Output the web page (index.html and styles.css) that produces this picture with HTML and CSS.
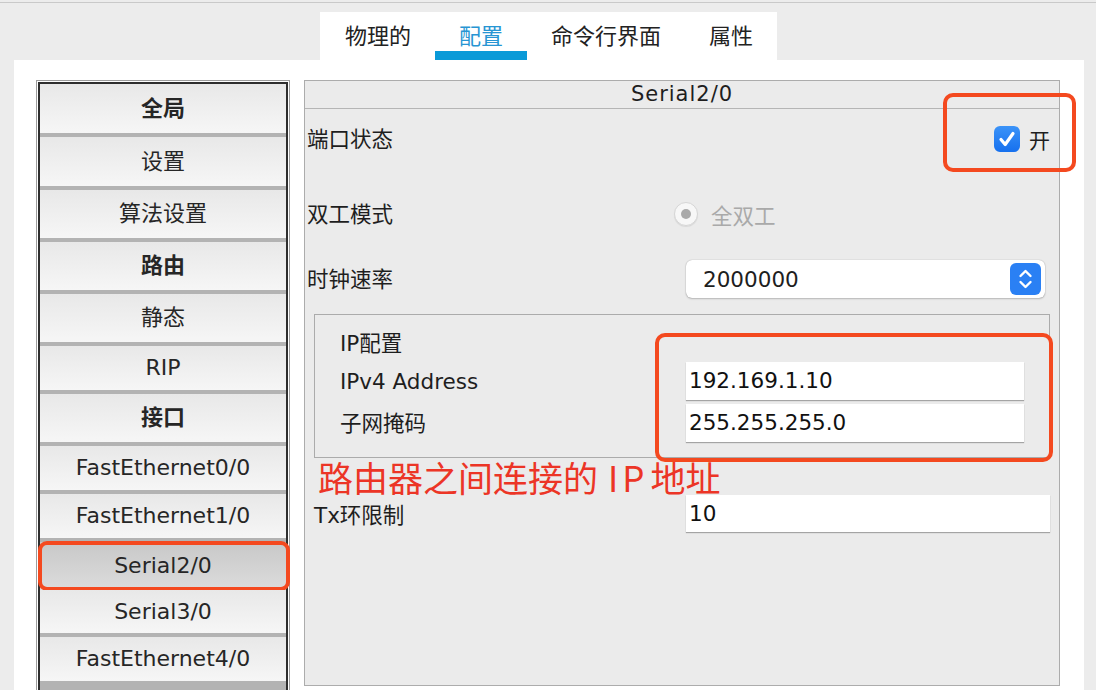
FILE: index.html
```html
<!DOCTYPE html>
<html lang="zh">

<head>
    <meta charset="UTF-8">
    <title>Router Serial2/0</title>
    <link rel="stylesheet" href="styles.css">
</head>

<body>

    <div class="topline"></div>

    <!-- Tabbladen -->
    <div class="tabs">
        <div class="tab">物理的</div>
        <div class="tab active">配置</div>
        <div class="tab">命令行界面</div>
        <div class="tab">属性</div>
    </div>

    <div class="content">

        <!-- Linker menu -->
        <div class="nav">
            <div class="nav-inner">
                <div class="item tall head">全局</div>
                <div class="item tall">设置</div>
                <div class="item mid">算法设置</div>
                <div class="item mid head">路由</div>
                <div class="item mid">静态</div>
                <div class="item">RIP</div>
                <div class="item mid head">接口</div>
                <div class="item">FastEthernet0/0</div>
                <div class="item">FastEthernet1/0</div>
                <div class="item mid selected">Serial2/0<span class="mark nav-mark"></span></div>
                <div class="item short">Serial3/0</div>
                <div class="item">FastEthernet4/0</div>
            </div>
        </div>

        <!-- Interface details -->
        <div class="detail">
            <div class="detail-head">Serial2/0</div>

            <div class="row row-status">
                <span class="label cjk">端口状态</span>
                <label class="onoff">
                    <svg width="26" height="26" viewBox="0 0 26 26">
                        <defs>
                            <linearGradient id="cb" x1="0" y1="0" x2="0" y2="1">
                                <stop offset="0" stop-color="#3b93f8" />
                                <stop offset="1" stop-color="#1670ee" />
                            </linearGradient>
                        </defs>
                        <rect x="0" y="0" width="26" height="26" rx="6" fill="url(#cb)" />
                        <polyline points="7,13.5 11.2,18.5 19,7.5" fill="none" stroke="#fff" stroke-width="3.2"
                            stroke-linecap="round" stroke-linejoin="round" />
                    </svg>
                    <span>开</span>
                </label>
                <span class="mark status-mark"></span>
            </div>

            <div class="row row-duplex">
                <span class="label cjk">双工模式</span>
                <span class="radio"><span class="dot"></span></span>
                <span class="radio-text">全双工</span>
            </div>

            <div class="row row-clock">
                <span class="label cjk">时钟速率</span>
                <div class="select">
                    <span>2000000</span>
                    <svg class="stepper" width="31" height="32" viewBox="0 0 31 32">
                        <rect x="0" y="0" width="31" height="32" rx="6" fill="#2a80f4" />
                        <polyline points="10.5,13 15.5,8 20.5,13" fill="none" stroke="#fff" stroke-width="2.4"
                            stroke-linecap="round" stroke-linejoin="round" />
                        <polyline points="10.5,19 15.5,24 20.5,19" fill="none" stroke="#fff" stroke-width="2.4"
                            stroke-linecap="round" stroke-linejoin="round" />
                    </svg>
                </div>
            </div>

            <div class="ipbox">
                <div class="ip-title">IP配置</div>
                <div class="ip-row">
                    <span class="ip-label">IPv4 Address</span>
                    <div class="field">192.169.1.10</div>
                </div>
                <div class="ip-row">
                    <span class="ip-label cjk">子网掩码</span>
                    <div class="field">255.255.255.0</div>
                </div>
                <span class="mark ip-mark"></span>
            </div>

            <div class="note">路由器之间连接的<span class="note-ip">IP</span>地址</div>

            <div class="row row-tx">
                <span class="label">Tx环限制</span>
                <div class="field wide">10</div>
            </div>
        </div>

    </div>

</body>

</html>
```

FILE: styles.css
```css
/* Basis */
html,
body {
    margin: 0;
    padding: 0;
    overflow: hidden;
}

body {
    background: #ececec;
    font-family: "DejaVu Sans", "Noto Sans CJK SC", sans-serif;
    color: #1e1e1e;
}

.topline {
    height: 2px;
    border-bottom: 1px solid #c9c9c9;
}

/* Tabbladen */
.tabs {
    display: inline-flex;
    margin: 9px 0 0 320px;
    background: #fff;
    height: 48px;
    padding-left: 1px;
}

.tab {
    position: relative;
    padding: 0 24px;
    font-family: "Noto Sans CJK SC", sans-serif;
    font-size: 22px;
    line-height: 45px;
    color: #222;
}

.tab.active {
    color: #2795d3;
}

.tab.active::after {
    content: "";
    position: absolute;
    left: 0;
    right: 0;
    bottom: 0;
    height: 9px;
    background: #0a9ad8;
}

/* Witte inhoud */
.content {
    display: flex;
    align-items: flex-start;
    gap: 14px;
    margin-left: 14px;
    width: 1070px;
    height: 630px;
    box-sizing: border-box;
    padding: 20px 0 0 22px;
    background: #fff;
    overflow: hidden;
}

/* Linker menu */
.nav {
    width: 254px;
    flex: none;
    box-sizing: border-box;
    border: 1px solid #9c9c9c;
    padding: 1px;
    background: #fff;
}

.nav-inner {
    min-height: 640px;
    border: 2px solid #2e2e2e;
    border-bottom: none;
    background: #b3b3b3;
}

.item {
    position: relative;
    height: 44px;
    border-bottom: 4px solid #b3b3b3;
    background: linear-gradient(#e8e8e8, #f6f6f6);
    text-align: center;
    font-size: 22px;
    line-height: 44px;
    color: #262626;
}

.item.tall {
    height: 49px;
    line-height: 49px;
}

.item.mid {
    height: 48px;
    line-height: 48px;
}

.item.short {
    height: 43px;
    line-height: 43px;
}

.item.head {
    font-weight: bold;
}

.item.selected {
    border-bottom: none;
    background: linear-gradient(#c8c8c8, #dcdcdc);
}

/* Rode markeringen */
.mark {
    position: absolute;
    box-sizing: border-box;
    border: 4px solid #f4491f;
    border-radius: 10px;
    pointer-events: none;
}

.nav-mark {
    left: -2px;
    right: -4px;
    top: -1px;
    bottom: -1px;
    border-radius: 9px;
}

.status-mark {
    right: -17px;
    top: -16px;
    width: 133px;
    height: 79px;
}

.ip-mark {
    left: 340px;
    top: 18px;
    width: 398px;
    height: 129px;
}

/* Details rechts */
.detail {
    width: 756px;
    height: 606px;
    flex: none;
    box-sizing: border-box;
    border: 1px solid #acacac;
    background: #ebebeb;
}

.detail-head {
    height: 27px;
    border-bottom: 1px solid #b5b5b5;
    text-align: center;
    font-size: 21px;
    line-height: 27px;
    letter-spacing: 1px;
}

.row {
    position: relative;
    display: flex;
    align-items: center;
    padding: 0 9px 0 2px;
}

.label {
    width: 379px;
    flex: none;
    font-size: 21.5px;
}

/* Chinese labels zitten iets lager, even optillen */
.cjk {
    padding-bottom: 4px;
}

.row-status {
    height: 60px;
}

.onoff {
    display: flex;
    align-items: center;
    gap: 9px;
    margin-left: auto;
    font-family: "Noto Sans CJK SC", sans-serif;
    font-size: 21px;
}

.row-duplex {
    height: 90px;
}

.radio {
    display: flex;
    align-items: center;
    justify-content: center;
    width: 24px;
    height: 24px;
    margin-left: -12px;
    box-sizing: border-box;
    border-radius: 50%;
    border: 1px solid #d6d6d6;
    background: #f7f7f7;
    box-shadow: 0 1px 1px rgba(0, 0, 0, 0.08);
}

.radio .dot {
    width: 10px;
    height: 10px;
    border-radius: 50%;
    background: #a9a9a9;
}

.radio-text {
    margin-left: 13px;
    font-family: "Noto Sans CJK SC", sans-serif;
    font-size: 21.5px;
    color: #a9a9a9;
}

.row-clock {
    height: 40px;
    padding-right: 14px;
}

.select {
    flex: 1;
    display: flex;
    align-items: center;
    justify-content: space-between;
    height: 38px;
    padding: 0 4px 0 17px;
    background: #fff;
    border-radius: 6px;
    box-shadow: 0 0 1px rgba(0, 0, 0, 0.35), 0 1px 2px rgba(0, 0, 0, 0.2);
    font-size: 21.5px;
}

/* IP configuratie */
.ipbox {
    position: relative;
    margin: 15px 9px 0;
    padding: 15px 0 15px 25px;
    border: 1px solid #ababab;
}

.ip-title {
    height: 28px;
    font-size: 21.5px;
    line-height: 28px;
}

.ip-row {
    display: flex;
    align-items: center;
    margin-top: 4px;
}

.ip-label {
    width: 346px;
    flex: none;
    font-size: 21.5px;
}

.field {
    width: 338px;
    height: 38px;
    box-sizing: border-box;
    padding-left: 3px;
    background: #fff;
    box-shadow: 0 1px 1px rgba(0, 0, 0, 0.3);
    font-size: 21.5px;
    line-height: 38px;
    color: #111;
}

.note {
    height: 37px;
    padding-left: 13px;
    font-family: "Noto Sans CJK SC", sans-serif;
    font-size: 35px;
    line-height: 37px;
    color: #ec3526;
}

.note-ip {
    margin: 0 2px 0 10px;
    letter-spacing: 4px;
}

.row-tx {
    padding-left: 9px;
}

.row-tx .label {
    width: 372px;
}

.field.wide {
    width: 364px;
    height: 37px;
    line-height: 37px;
}
```
